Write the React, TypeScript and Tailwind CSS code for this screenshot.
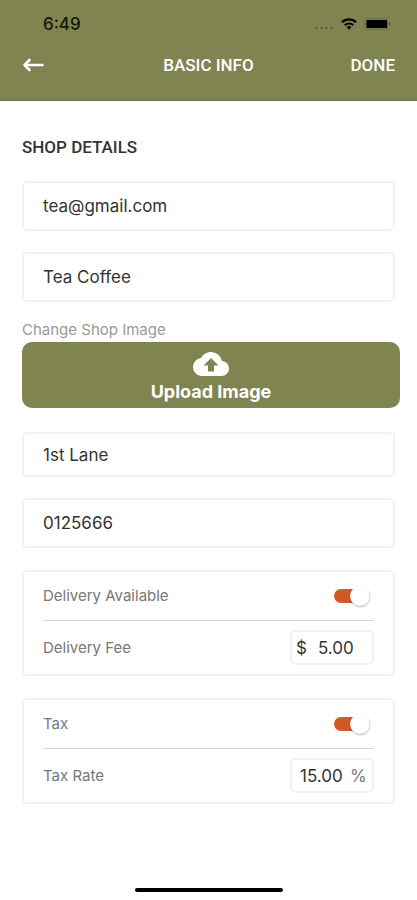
import { useState } from "react";
import type { ReactNode } from "react";
import { MdCloudUpload } from "react-icons/md";

function StatusBar() {
  return (
    <div className="flex h-12 items-center justify-between pl-[43px] pr-[26px]">
      <span className="font-['Inter',sans-serif] text-[17px] leading-6 font-medium text-[#15170c]">6:49</span>
      <div className="flex items-center gap-2">
        <svg width="18" height="4" viewBox="0 0 18 4" className="mt-2" fill="#5f633c" aria-hidden="true">
          <circle cx="1.5" cy="2" r="1.3" />
          <circle cx="6.5" cy="2" r="1.3" />
          <circle cx="11.5" cy="2" r="1.3" />
          <circle cx="16.5" cy="2" r="1.3" />
        </svg>
        <svg width="16" height="12" viewBox="0 0 16 12" fill="none" stroke="#000" aria-hidden="true">
          <path d="M1 4.2A10 10 0 0 1 15 4.2" strokeWidth="2.2" />
          <path d="M3.7 7.2A6.2 6.2 0 0 1 12.3 7.2" strokeWidth="2" />
          <path d="M8 11.8L5.6 9.3A3.4 3.4 0 0 1 10.4 9.3Z" fill="#000" stroke="none" />
        </svg>
        <svg width="26" height="12" viewBox="0 0 26 12" aria-hidden="true">
          <rect x="0.5" y="0.5" width="22" height="11" rx="2" fill="none" stroke="#6c7045" />
          <rect x="1.5" y="2" width="20.5" height="8" rx="0.5" fill="#000" />
          <path d="M23.5 3.8L25.5 6L23.5 8.2Z" fill="#565a37" />
        </svg>
      </div>
    </div>
  );
}

function TextField({ label, initial, height, type = "text" }: { label: string; initial: string; height: string; type?: string }) {
  return (
    <input
      aria-label={label}
      type={type}
      defaultValue={initial}
      className={`${height} block w-full rounded-[5px] border-2 border-[#f2f2f2] bg-white px-[19px] text-[17px] leading-6 text-[#333] outline-none`}
    />
  );
}

function Toggle({ id }: { id: string }) {
  const [on, setOn] = useState(true);
  return (
    <span className="relative mr-1 flex h-5 w-9 items-center">
      <input
        id={id}
        type="checkbox"
        role="switch"
        checked={on}
        onChange={(e) => setOn(e.target.checked)}
        className="peer h-[14px] w-9 cursor-pointer appearance-none rounded-full bg-gray-300 checked:bg-[#d15a24]"
      />
      <span className="pointer-events-none absolute left-0 size-5 rounded-full bg-white shadow-[0_1px_2px_rgba(0,0,0,0.3)] peer-checked:left-4" />
    </span>
  );
}

function SettingsCard({ id, title, rateLabel, children }: { id: string; title: string; rateLabel: string; children: ReactNode }) {
  return (
    <div className="rounded-[5px] border-2 border-[#f2f2f2] bg-white px-[19px] text-[15px] leading-5 text-[#777]">
      <div className="flex h-[49px] items-center justify-between border-b border-[#d4d4d4]">
        <label htmlFor={`${id}-on`}>{title}</label>
        <Toggle id={`${id}-on`} />
      </div>
      <div className="flex h-[53px] items-center justify-between">
        <label htmlFor={`${id}-value`}>{rateLabel}</label>
        <div className="flex h-[35px] w-[84px] items-center rounded-[5px] border-2 border-[#f2f2f2] px-1">{children}</div>
      </div>
    </div>
  );
}

export default function App() {
  return (
    <div className="flex min-h-screen flex-col bg-white font-['Inter',sans-serif]">
      <header className="h-[101px] border-b border-[#6f7347] bg-[#7f8450]">
        <StatusBar />
        <div className="grid h-[34px] grid-cols-[1fr_auto_1fr] items-center px-[22px] font-['Roboto',sans-serif] text-[17px] leading-6 font-medium text-white">
          <button type="button" aria-label="Back" className="justify-self-start">
            <svg width="22" height="14" viewBox="0 0 22 14" fill="none" stroke="#fff" strokeWidth="2.6" strokeLinecap="round" strokeLinejoin="round" aria-hidden="true">
              <path d="M20.5 7H2.5M7.5 2L2.5 7L7.5 12" />
            </svg>
          </button>
          <h1>BASIC INFO</h1>
          <button type="button" className="justify-self-end">DONE</button>
        </div>
      </header>

      <main className="flex-1 px-[22px] pt-[34px]">
        <h2 className="mb-[22px] font-['Roboto',sans-serif] text-[17px] leading-6 font-medium text-[#333]">SHOP DETAILS</h2>
        <div className="flex flex-col gap-[21px]">
          <TextField label="Email" type="email" initial="tea@gmail.com" height="h-[50px]" />
          <TextField label="Shop name" initial="Tea Coffee" height="h-[50px]" />
        </div>
        <p className="mt-[18px] text-[15px] leading-5 text-[#999]">Change Shop Image</p>
        <div className="-mr-[5px] mt-[2px]">
          <button type="button" className="flex h-[66px] w-full flex-col items-center rounded-[10px] bg-[#7f8450] pt-1 text-white">
            <MdCloudUpload className="size-9" aria-hidden="true" />
            <span className="-mt-[2px] text-[18px] leading-6 font-bold">Upload Image</span>
          </button>
        </div>
        <div className="mt-6 flex flex-col gap-[21px]">
          <TextField label="Address" initial="1st Lane" height="h-[45px]" />
          <TextField label="Phone" type="tel" initial="0125666" height="h-[50px]" />
        </div>
        <div className="mt-[22px] flex flex-col gap-[22px]">
          <SettingsCard id="delivery" title="Delivery Available" rateLabel="Delivery Fee">
            <span className="text-[17px] text-[#333]">$</span>
            <input id="delivery-value" inputMode="decimal" defaultValue="5.00" className="ml-[11px] w-12 text-[17px] leading-6 text-[#333] outline-none" />
          </SettingsCard>
          <SettingsCard id="tax" title="Tax" rateLabel="Tax Rate">
            <input id="tax-value" inputMode="decimal" defaultValue="15.00" className="ml-1 w-[50px] text-[17px] leading-6 text-[#333] outline-none" />
            <span className="text-[17px] text-[#777]">%</span>
          </SettingsCard>
        </div>
      </main>

      <footer className="flex justify-center pb-2">
        <div className="h-1 w-[148px] rounded-full bg-black" />
      </footer>
    </div>
  );
}
